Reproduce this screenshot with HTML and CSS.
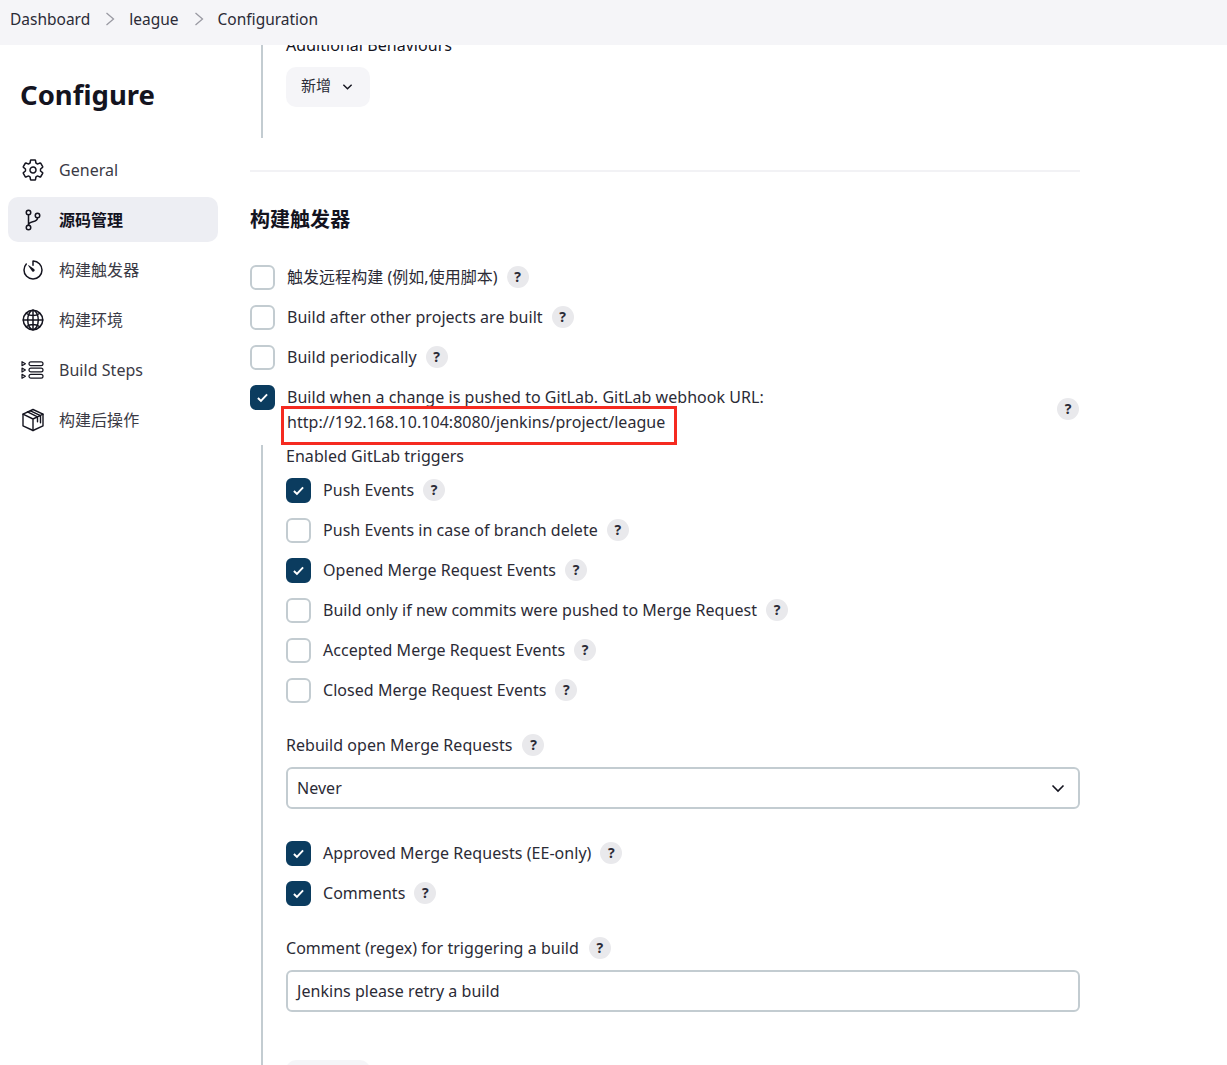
FILE: index.html
```html
<!DOCTYPE html>
<html lang="en">
<head>
<meta charset="utf-8">
<title>Configuration</title>
<link rel="stylesheet" href="styles.css">
</head>
<body>
<header class="topbar">
  <span>Dashboard</span>
  <svg class="crumb-sep" viewBox="0 0 10 14"><path d="M1.500 1 8.500 7l-7 6"/></svg>
  <span>league</span>
  <svg class="crumb-sep" viewBox="0 0 10 14"><path d="M1.500 1 8.500 7l-7 6"/></svg>
  <span>Configuration</span>
</header>
<div class="page">
  <aside class="sidebar">
    <h1 class="title">Configure</h1>
    <nav class="nav">
      <a class="nav-item">
        <svg class="nav-icon" viewBox="0 0 512 512"><path d="M262.290 192.310a64 64 0 1 0 57.400 57.400 64.130 64.130 0 0 0-57.400-57.400zM416.390 256a154.340 154.340 0 0 1-1.530 20.790l45.210 35.460a10.810 10.810 0 0 1 2.450 13.750l-42.770 74a10.810 10.810 0 0 1-13.140 4.590l-44.900-18.080a16.110 16.110 0 0 0-15.170 1.750A164.480 164.480 0 0 1 325 400.800a15.940 15.940 0 0 0-8.820 12.140l-6.730 47.890a11.080 11.080 0 0 1-10.680 9.170h-85.540a11.110 11.110 0 0 1-10.690-8.870l-6.720-47.820a16.070 16.070 0 0 0-9-12.220 155.300 155.300 0 0 1-21.460-12.570 16 16 0 0 0-15.110-1.710l-44.890 18.070a10.810 10.810 0 0 1-13.140-4.580l-42.770-74a10.800 10.800 0 0 1 2.450-13.750l38.210-30a16.050 16.050 0 0 0 6-14.080c-.36-4.170-.58-8.330-.58-12.500s.21-8.270.58-12.350a16 16 0 0 0-6.070-13.940l-38.190-30A10.810 10.810 0 0 1 49.480 186l42.770-74a10.810 10.810 0 0 1 13.140-4.590l44.900 18.080a16.110 16.110 0 0 0 15.170-1.750A164.480 164.480 0 0 1 187 111.200a15.940 15.940 0 0 0 8.820-12.140l6.730-47.890A11.080 11.080 0 0 1 213.230 42h85.540a11.110 11.110 0 0 1 10.690 8.870l6.720 47.820a16.070 16.070 0 0 0 9 12.220 155.300 155.300 0 0 1 21.460 12.570 16 16 0 0 0 15.110 1.710l44.890-18.070a10.810 10.810 0 0 1 13.140 4.580l42.770 74a10.800 10.800 0 0 1-2.450 13.750l-38.210 30a16.050 16.050 0 0 0-6.100 14.080c.37 4.140.58 8.300.58 12.470z"/></svg>
        <span>General</span>
      </a>
      <a class="nav-item active">
        <svg class="nav-icon" viewBox="0 0 512 512"><circle cx="160" cy="96" r="48"/><circle cx="160" cy="416" r="48"/><path d="M160 368V144"/><circle cx="352" cy="160" r="48"/><path d="M352 208c0 128-192 48-192 160"/></svg>
        <span>源码管理</span>
      </a>
      <a class="nav-item">
        <svg class="nav-icon" viewBox="0 0 512 512"><path d="M112.910 128A191.850 191.850 0 0 0 64 254c-1.180 106.350 85.650 193.800 192 194 106.200.2 192-85.830 192-192 0-104.540-83.550-189.610-187.500-192a4.360 4.360 0 0 0-4.500 4.370V152"/><path class="solid" d="m233.380 278.630-79-113a8.130 8.130 0 0 1 11.320-11.320l113 79a32.500 32.500 0 0 1-37.250 53.260 33.210 33.210 0 0 1-8.070-7.940z"/></svg>
        <span>构建触发器</span>
      </a>
      <a class="nav-item">
        <svg class="nav-icon" viewBox="0 0 512 512"><path d="M256 48C141.130 48 48 141.130 48 256s93.130 208 208 208 208-93.130 208-208S370.870 48 256 48z"/><path d="M256 48c-58.070 0-112.670 93.130-112.670 208S197.930 464 256 464s112.670-93.130 112.670-208S314.070 48 256 48z"/><path d="M117.330 117.330c38.240 27.150 86.380 43.340 138.670 43.340s100.430-16.190 138.670-43.340M394.670 394.670c-38.240-27.150-86.380-43.340-138.670-43.340s-100.430 16.190-138.670 43.340M256 48v416M464 256H48"/></svg>
        <span>构建环境</span>
      </a>
      <a class="nav-item">
        <svg class="nav-icon" viewBox="0 0 24 24"><g class="thin"><rect x="8" y="3.800" width="14" height="3.800" rx="1.900"/><rect x="8" y="10.100" width="14" height="3.800" rx="1.900"/><rect x="8" y="16.400" width="14" height="3.800" rx="1.900"/><path d="m1 3.700 3.400 2-3.400 2zM1 10l3.400 2L1 14zM1 16.300l3.400 2-3.400 2z"/></g></svg>
        <span>Build Steps</span>
      </a>
      <a class="nav-item">
        <svg class="nav-icon" viewBox="0 0 24 24"><g class="mid"><path d="M12 1.500 2 6.200v11.600L12 22.500l10-4.700V6.200z"/><path d="m2 6.200 10 4.800 10-4.800M12 11v11.500M6.500 3.800l10 5v5M9.500 2.800l10 4.900v7"/></g></svg>
        <span>构建后操作</span>
      </a>
    </nav>
  </aside>
  <main class="main">
    <section class="rail rail-top">
      <div class="behaviours-label">Additional Behaviours</div>
      <button class="add-btn"><span class="add-text">新增</span>
        <svg class="chev-sm" viewBox="0 0 12 8"><path d="m1.500 1.500 4.500 4.500 4.500-4.500"/></svg>
      </button>
    </section>
    <hr class="divider">
    <h2 class="section-title">构建触发器</h2>

    <div class="check-list">
      <label class="check-row"><span class="box"></span><span>触发远程构建 (例如,使用脚本)</span><span class="help">?</span></label>
      <label class="check-row"><span class="box"></span><span>Build after other projects are built</span><span class="help">?</span></label>
      <label class="check-row"><span class="box"></span><span>Build periodically</span><span class="help">?</span></label>
    </div>

    <div class="gitlab-row">
      <span class="box on"><svg class="tick" viewBox="0 0 14 12"><path d="m2 6.500 3.300 3.300L12 2.500"/></svg></span>
      <div class="gitlab-text">
        <div>Build when a change is pushed to GitLab. GitLab webhook URL:</div>
        <div class="url">http://192.168.10.104:8080/jenkins/project/league</div>
      </div>
      <span class="help">?</span>
    </div>

    <section class="rail rail-nested">
      <div class="sub-label first">Enabled GitLab triggers</div>
      <div class="check-list nested-list">
        <label class="check-row"><span class="box on"><svg class="tick" viewBox="0 0 14 12"><path d="m2 6.500 3.300 3.300L12 2.500"/></svg></span><span>Push Events</span><span class="help">?</span></label>
        <label class="check-row"><span class="box"></span><span>Push Events in case of branch delete</span><span class="help">?</span></label>
        <label class="check-row"><span class="box on"><svg class="tick" viewBox="0 0 14 12"><path d="m2 6.500 3.300 3.300L12 2.500"/></svg></span><span>Opened Merge Request Events</span><span class="help">?</span></label>
        <label class="check-row"><span class="box"></span><span>Build only if new commits were pushed to Merge Request</span><span class="help">?</span></label>
        <label class="check-row"><span class="box"></span><span>Accepted Merge Request Events</span><span class="help">?</span></label>
        <label class="check-row"><span class="box"></span><span>Closed Merge Request Events</span><span class="help">?</span></label>
      </div>

      <div class="sub-label rebuild">Rebuild open Merge Requests <span class="help">?</span></div>
      <div class="field select">Never
        <svg class="chev" viewBox="0 0 14 9"><path d="m1.500 1.500 5.500 5.500 5.500-5.500"/></svg>
      </div>

      <div class="check-list approved-list">
        <label class="check-row"><span class="box on"><svg class="tick" viewBox="0 0 14 12"><path d="m2 6.500 3.300 3.300L12 2.500"/></svg></span><span>Approved Merge Requests (EE-only)</span><span class="help">?</span></label>
        <label class="check-row"><span class="box on"><svg class="tick" viewBox="0 0 14 12"><path d="m2 6.500 3.300 3.300L12 2.500"/></svg></span><span>Comments</span><span class="help">?</span></label>
      </div>

      <div class="sub-label comment">Comment (regex) for triggering a build <span class="help">?</span></div>
      <div class="field">Jenkins please retry a build</div>
      <div class="ghost-btn"></div>
    </section>
  </main>
</div>
</body>
</html>
```
FILE: styles.css
```css
* { box-sizing: border-box; }
html, body { margin: 0; height: 1065px; overflow: hidden; background: #fff; }
body {
  font-family: "Noto Sans", "Noto Sans CJK SC", sans-serif;
  font-size: 16px;
  line-height: 24px;
  letter-spacing: .04px;
  color: #14141f;
}
.topbar {
  position: relative;
  z-index: 2;
  height: 45px;
  background: #f5f5f8;
  display: flex;
  align-items: center;
  padding: 0 0 8px 10px;
  font-size: 15.500px;
  letter-spacing: 0;
  color: #2b2b36;
}
.crumb-sep {
  width: 10px;
  height: 14px;
  margin: 0 14px 0 15px;
  fill: none;
  stroke: #9a9aa3;
  stroke-width: 1.300;
}
.page { display: flex; height: 1020px; }
.sidebar { width: 250px; flex: none; padding: 0 32px 0 8px; }
.title {
  margin: 32px 0 0 12px;
  font-size: 27.500px;
  line-height: 36px;
  font-weight: 700;
  letter-spacing: 0;
  color: #14141f;
}
.nav { margin-top: 34px; display: flex; flex-direction: column; gap: 5px; }
.nav-item {
  height: 45px;
  display: flex;
  align-items: center;
  gap: 14px;
  padding-left: 13px;
  border-radius: 10px;
  color: #3a3a45;
  font-size: 16px;
}
.nav-item.active { background: #edeef3; color: #14141f; font-weight: 600; }
.nav-icon {
  width: 24px;
  height: 24px;
  flex: none;
  fill: none;
  stroke: #14141f;
  stroke-width: 32px;
  stroke-linecap: round;
  stroke-linejoin: round;
}
.nav-icon .solid { fill: #14141f; stroke: none; }
.nav-icon .thin { stroke-width: 1.200px; }
.nav-icon .mid { stroke-width: 1.400px; }
.main { width: 830px; flex: none; }
.rail {
  border-left: 2px solid #c3ccd1;
  margin-left: 11px;
  padding-left: 23px;
  display: flow-root;
}
.rail-top { height: 93px; }
.behaviours-label { margin-top: -12px; }
.add-btn {
  margin-top: 10px;
  width: 84px;
  height: 40px;
  border: 0;
  border-radius: 10px;
  background: #f5f5f8;
  font: inherit;
  font-size: 15px;
  color: #2b2b36;
  display: flex;
  align-items: center;
  gap: 11px;
  padding: 0 0 0 15px;
}
.add-text { margin-top: -4px; }
.chev-sm { width: 11px; height: 8px; fill: none; stroke: #14141f; stroke-width: 1.500; }
.divider { border: 0; height: 2px; background: #f2f2f5; margin: 32px 0 0; }
.section-title {
  margin: 33px 0 0;
  font-size: 20px;
  line-height: 30px;
  font-weight: 700;
  color: #14141f;
}
.check-list { display: flex; flex-direction: column; gap: 15px; margin-top: 30px; }
.check-row { display: flex; align-items: center; gap: 12px; height: 25px; color: #2b2b36; }
.check-row .help { margin-top: -2px; }
.box + span { margin-top: -2px; }
.box {
  width: 25px;
  height: 25px;
  flex: none;
  border: 2px solid #c3ccd1;
  border-radius: 6px;
  background: #fff;
  display: flex;
  align-items: center;
  justify-content: center;
}
.box.on { background: #0b3c5f; border-color: #0b3c5f; }
.tick { width: 13px; height: 11px; fill: none; stroke: #fff; stroke-width: 2.100; }
.help {
  width: 22px;
  height: 22px;
  flex: none;
  display: inline-flex;
  align-items: center;
  justify-content: center;
  border-radius: 50%;
  background: #e9e9ec;
  font-size: 14px;
  line-height: 22px;
  font-weight: 700;
  color: #2b2b36;
  margin-left: -3px;
}
.gitlab-row {
  display: flex;
  align-items: center;
  margin-top: 15px;
  height: 50px;
}
.gitlab-row .box { align-self: flex-start; }
.gitlab-text { flex: 1; margin-left: 12px; line-height: 25px; color: #2b2b36; }
.gitlab-row .help { margin: -2px 1px 0 0; }
.url { position: relative; width: max-content; }
.url::after {
  content: "";
  position: absolute;
  left: -6px;
  right: -12px;
  top: -4px;
  bottom: -10px;
  border: 3px solid #f52a20;
}
.rail-nested { margin-top: 10px; height: 1000px; }
.sub-label { display: flex; align-items: center; color: #2b2b36; height: 24px; gap: 13px; }
.sub-label.first { height: 22px; }
.nested-list { margin-top: 11px; }
.rebuild { margin-top: 30px; }
.field {
  height: 42px;
  margin-top: 10px;
  border: 2px solid #c3ccd1;
  border-radius: 6px;
  padding: 0 9px;
  display: flex;
  align-items: center;
  justify-content: space-between;
  color: #2b2b36;
  width: 794px;
}
.chev { width: 14px; height: 9px; margin-right: 4px; fill: none; stroke: #14141f; stroke-width: 1.600; }
.approved-list { margin-top: 32px; }
.comment { margin-top: 30px; }
.ghost-btn { width: 84px; height: 40px; margin-top: 48px; background: #f5f5f8; border-radius: 10px; }
```
